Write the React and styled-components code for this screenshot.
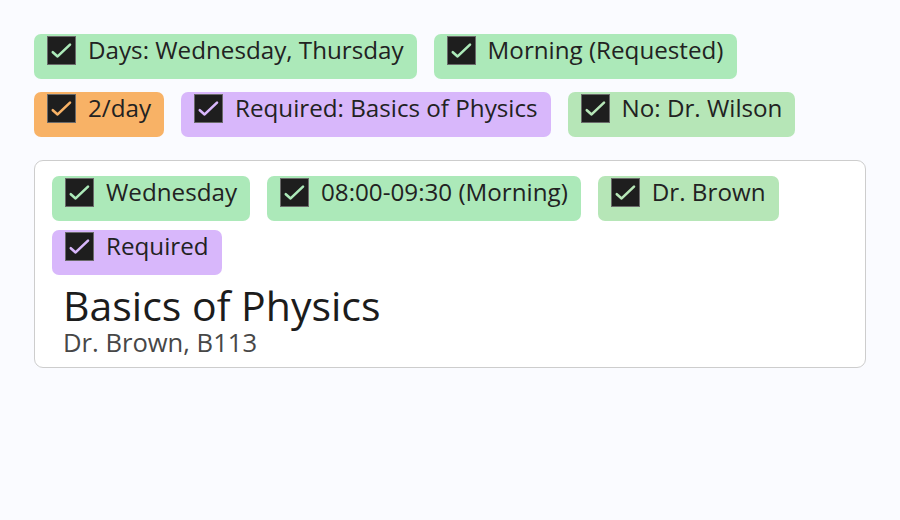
import React from 'react';
import styled, { createGlobalStyle } from 'styled-components';

const GlobalStyle = createGlobalStyle`
  body {
    margin: 0;
    background: #fafbff;
    font-family: "Open Sans", "Noto Sans", sans-serif;
    color: #222;
  }
`;

const tones = {
  green: '#ace9b9',
  mint: '#b6e6b7',
  orange: '#f8b266',
  purple: '#d8b7fb',
};

const Page = styled.div`
  padding: 34px;
  display: flex;
  flex-direction: column;
  gap: 13px;
`;

const ChipRow = styled.div`
  display: flex;
  flex-wrap: wrap;
  gap: ${({ tight }) => (tight ? '9px' : '13px')} 17px;
`;

const ChipStack = styled.div`
  display: flex;
  flex-direction: column;
  gap: 9px;
`;

const Chip = styled.label`
  display: inline-flex;
  align-items: center;
  gap: 12px;
  padding: 0 13px 12px 13px;
  background: ${({ tone }) => tones[tone]};
  border-radius: 7px;
  font-size: 24.2px;
  line-height: 1.362;
  white-space: nowrap;
`;

const Box = styled.span`
  box-sizing: border-box;
  width: 29px;
  height: 29px;
  flex: none;
  background: #1e1e1e;
  border: 1px solid #6a6a6a;
  display: flex;
  align-items: center;
  justify-content: center;
`;

const Card = styled.div`
  margin-top: 10px;
  background: #fff;
  border: 1px solid #cdcdcd;
  border-radius: 9px;
  padding: 15px 17px 12px 17px;
  display: flex;
  flex-direction: column;
`;

const Info = styled.div`
  padding: 10px 0 0 11px;
`;

const Title = styled.div`
  font-size: 41px;
  line-height: 1;
  color: #1c1c1c;
`;

const Subtitle = styled.div`
  margin-top: 4px;
  font-size: 25.6px;
  line-height: 1;
  color: #474747;
`;

const Check = ({ tone }) => (
  <Box>
    <svg width="27" height="27" viewBox="0 0 27 27">
      <path
        d="M4.8 15.2 L9.6 19.4 L22 7.6"
        fill="none"
        stroke={tones[tone]}
        strokeWidth="2.6"
        strokeLinecap="round"
        strokeLinejoin="round"
      />
    </svg>
  </Box>
);

const Tag = ({ tone, children }) => (
  <Chip tone={tone}>
    <Check tone={tone} />
    {children}
  </Chip>
);

export default function App() {
  return (
    <>
      <GlobalStyle />
      <Page>
        <ChipRow>
          <Tag tone="green">Days: Wednesday, Thursday</Tag>
          <Tag tone="green">Morning (Requested)</Tag>
        </ChipRow>
        <ChipRow>
          <Tag tone="orange">2/day</Tag>
          <Tag tone="purple">Required: Basics of Physics</Tag>
          <Tag tone="mint">No: Dr. Wilson</Tag>
        </ChipRow>
        <Card>
          <ChipStack>
            <ChipRow tight>
              <Tag tone="green">Wednesday</Tag>
              <Tag tone="green">08:00-09:30 (Morning)</Tag>
              <Tag tone="mint">Dr. Brown</Tag>
            </ChipRow>
            <ChipRow tight>
              <Tag tone="purple">Required</Tag>
            </ChipRow>
          </ChipStack>
          <Info>
            <Title>Basics of Physics</Title>
            <Subtitle>Dr. Brown, B113</Subtitle>
          </Info>
        </Card>
      </Page>
    </>
  );
}
